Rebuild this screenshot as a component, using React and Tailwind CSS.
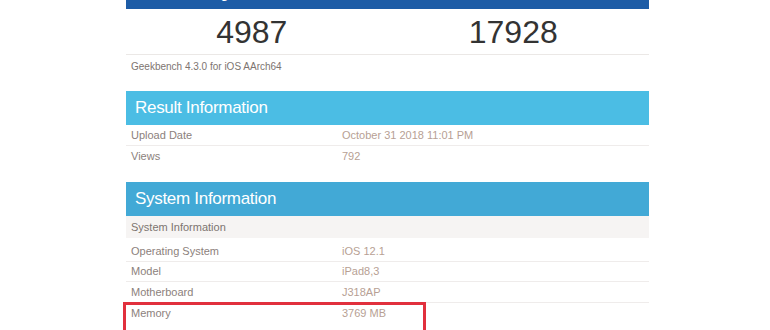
import React from "react";

const Row = ({ label, value, last }) => (
  <div
    className={`flex h-[20.5px] items-center text-[11px] ${
      last ? "" : "border-b border-[#efeceb]"
    }`}
  >
    <span className="w-[216px] pl-[5px] text-[#8c817c]">{label}</span>
    <span className="text-[#b79f94]">{value}</span>
  </div>
);

const Header = ({ title, color }) => (
  <div className={`flex h-[34px] items-center pl-[9px] ${color}`}>
    <h2 className="text-[17px] tracking-[-0.3px] text-white">{title}</h2>
  </div>
);

const App = () => {
  return (
    <main
      className="h-[330px] w-[770px] overflow-hidden bg-white pt-px"
      style={{ fontFamily: '"Liberation Sans", Arial, sans-serif' }}
    >
      <div className="relative ml-[126px] mt-[-19px] w-[523px]">
        <div className="flex h-[27px] items-start bg-[#1d5ca6] pt-[2px] text-[13px] font-bold text-white">
          <span className="w-1/2 text-center">Single-Core Score</span>
          <span className="w-1/2 text-center">Multi-Core Score</span>
        </div>
        <div className="flex h-[46px] items-center border-b border-[#ebe8e6] text-[32px] text-[#333]">
          <span className="w-1/2 pr-[10px] text-center">4987</span>
          <span className="w-1/2 pr-[10px] text-center">17928</span>
        </div>
        <p className="pl-[5px] pt-[4px] text-[10px] text-[#7d7470]">
          Geekbench 4.3.0 for iOS AArch64
        </p>
        <div className="mt-[17px]">
          <Header title="Result Information" color="bg-[#4bbde4]" />
          <Row label="Upload Date" value="October 31 2018 11:01 PM" />
          <Row label="Views" value="792" last />
        </div>
        <div className="mt-[16px]">
          <Header title="System Information" color="bg-[#42a9d6]" />
          <div className="flex h-[22px] items-center bg-[#f6f4f3] pl-[5px] text-[11px] text-[#7d7470]">
            System Information
          </div>
          <div className="h-[3px]" />
          <Row label="Operating System" value="iOS 12.1" />
          <Row label="Model" value="iPad8,3" />
          <Row label="Motherboard" value="J318AP" />
          <Row label="Memory" value="3769 MB" last />
        </div>
        <div className="absolute left-[-3px] top-[320px] h-[40px] w-[303px] border-[3px] border-[#e1303d]" />
      </div>
    </main>
  );
};

export default App;
